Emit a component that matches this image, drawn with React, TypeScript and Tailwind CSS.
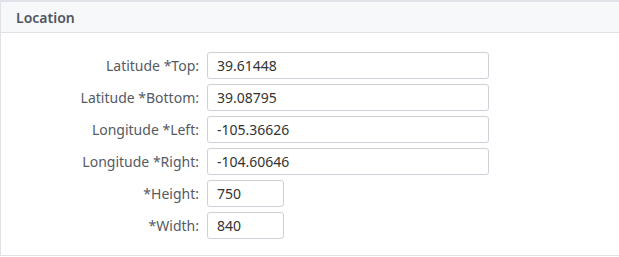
import React from "react";

const rows: { label: string; value: string; w: string }[] = [
  { label: "Latitude *Top:", value: "39.61448", w: "w-[282px]" },
  { label: "Latitude *Bottom:", value: "39.08795", w: "w-[282px]" },
  { label: "Longitude *Left:", value: "-105.36626", w: "w-[282px]" },
  { label: "Longitude *Right:", value: "-104.60646", w: "w-[282px]" },
  { label: "*Height:", value: "750", w: "w-[77px]" },
  { label: "*Width:", value: "840", w: "w-[77px]" },
];

export default function App() {
  return (
    <div className="w-[619px] h-[257px] bg-white" style={{ fontFamily: '"Segoe UI", "Noto Sans", sans-serif' }}>
      <div className="w-[625px] h-[256px] border border-[#dfe2e7] border-t-2 flex flex-col">
        <div className="h-[31px] bg-[#f7f8fa] border-b border-[#dfe2e7] flex items-center pl-[15px] text-[14px] font-semibold text-[#505560]">
          Location
        </div>
        <div className="pt-[19px] grid grid-cols-[198px_auto] gap-x-[8px] gap-y-[5px] justify-start items-center">
          {rows.map((r) => (
            <React.Fragment key={r.label}>
              <div className="text-right text-[14px] text-[#555a63] leading-none">{r.label}</div>
              <input
                readOnly
                value={r.value}
                className={`${r.w} h-[27px] border border-[#ced2d8] rounded-[3px] px-[9px] text-[14px] text-[#333] outline-none`}
              />
            </React.Fragment>
          ))}
        </div>
      </div>
    </div>
  );
}
